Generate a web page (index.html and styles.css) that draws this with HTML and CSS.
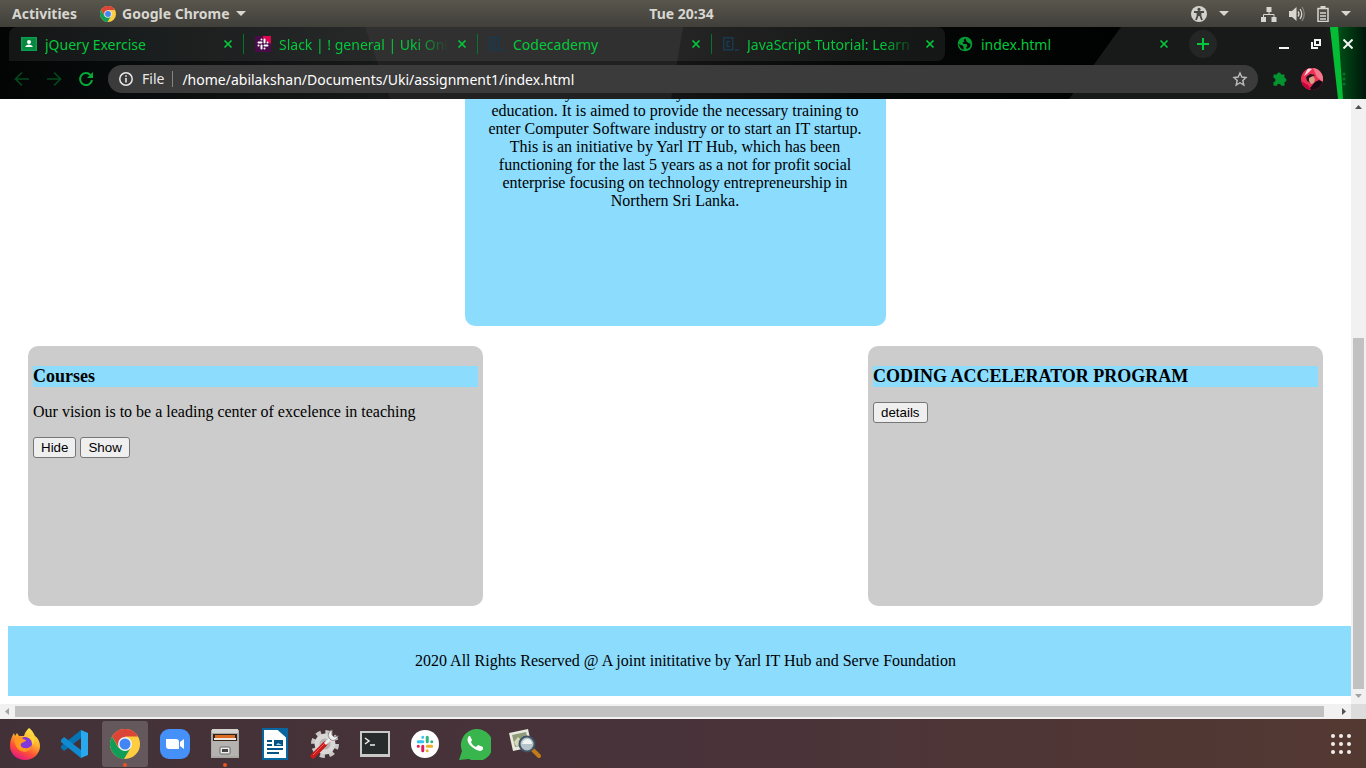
FILE: index.html
```html
<!DOCTYPE html>
<html lang="en">
<head>
<meta charset="utf-8">
<title>index.html</title>
<link rel="stylesheet" href="styles.css">
</head>
<body>
<svg width="0" height="0" class="defs" aria-hidden="true">
  <defs>
    <symbol id="close" viewBox="0 0 10 10"><path d="M1.500 1.500l7 7M8.500 1.500l-7 7" fill="none" stroke="currentColor" stroke-width="1.700"/></symbol>
    <symbol id="chrome" viewBox="0 0 30 30">
      <circle cx="15" cy="15" r="15" fill="#ffcd40"/>
      <path d="M2 7.500A15 15 0 0 1 28 7.500H15L9 19z" fill="#dc4437"/>
      <path d="M2 7.500A15 15 0 0 0 14 30L20.500 19H8.500z" fill="#0f9d58"/>
      <circle cx="15" cy="15" r="7" fill="#f1f1f1"/><circle cx="15" cy="15" r="5.500" fill="#4285f4"/>
    </symbol>
    <symbol id="caret" viewBox="0 0 10 5"><path d="M0 0h10L5 5z" fill="currentColor"/></symbol>
    <symbol id="codecademy" viewBox="0 0 16 16"><path d="M.7 1.700h9v12h-9zM7 5.500H4v5h3M12 14h4" fill="none" stroke="#173a50" stroke-width="1.500"/></symbol>
    <symbol id="slack" viewBox="0 0 24 24">
      <g fill="none" stroke-width="4" stroke-linecap="round">
        <path d="M9 9H3M9 3v.1" stroke="var(--a,#36c5f0)"/><path d="M15 9V3M21 9h.1" stroke="var(--b,#2eb67d)"/>
        <path d="M15 15h6M15 21v.1" stroke="var(--c,#ecb22e)"/><path d="M9 15v6M3 15h.1" stroke="var(--d,#e01e5a)"/>
      </g>
    </symbol>
  </defs>
</svg>

<header class="topbar">
  <div class="topbar-left">
    <button class="plain" type="button">Activities</button>
    <button class="plain app-menu" type="button"><svg width="16" height="16"><use href="#chrome"/></svg>Google Chrome<svg width="10" height="5"><use href="#caret"/></svg></button>
  </div>
  <time>Tue 20:34</time>
  <div class="topbar-right">
    <svg width="16" height="16" viewBox="0 0 16 16"><circle cx="8" cy="8" r="8" fill="#d3d1cc"/><g fill="none" stroke="#4b4943" stroke-width="1.800"><path d="M3 6h10M8 6v4M6.500 6v4l-1.500 4M9.500 6v4l1.500 4"/></g><circle cx="8" cy="3.400" r="1.600" fill="#4b4943"/></svg>
    <svg class="caret-access" width="10" height="5"><use href="#caret"/></svg>
    <svg width="16" height="16" viewBox="0 0 16 16"><path d="M5.500 1h5v5h-5zM0 11h5v5H0zM10.500 11h5v5h-5z" fill="currentColor"/><path d="M8 6v2.500M2.500 11V8.500h10.500V11" fill="none" stroke="currentColor"/></svg>
    <svg width="16" height="16" viewBox="0 0 16 16"><path d="M0 5h3l4.500-4v14L3 11H0z" fill="currentColor"/><path d="M9 5.500q2 2.500 0 5M11 3q3.500 5 0 10" fill="none" stroke="currentColor" stroke-width="1.300"/><path d="M13 1q4.500 7 0 14" fill="none" stroke="#85827a" stroke-width="1.300"/></svg>
    <svg width="12" height="16" viewBox="0 0 12 16"><path d="M1 2.500h10v13H1zM3 7h6M3 10h6M3 13h6" fill="none" stroke="currentColor" stroke-width="1.500"/><path d="M3.500 0h5v3h-5z" fill="currentColor"/></svg>
    <svg width="10" height="5"><use href="#caret"/></svg>
  </div>
</header>

<section class="browser">
  <svg class="theme" viewBox="0 0 1366 72" preserveAspectRatio="none" aria-hidden="true">
    <defs>
      <linearGradient id="base"><stop offset="0" stop-color="#030505"/><stop offset=".1" stop-color="#090c0c"/><stop offset=".27" stop-color="#171919"/><stop offset=".48" stop-color="#202020"/><stop offset="1" stop-color="#1b1b1b"/></linearGradient>
      <linearGradient id="dark"><stop offset="0" stop-color="#151515"/><stop offset=".4" stop-color="#060707"/><stop offset="1" stop-color="#000202"/></linearGradient>
      <linearGradient id="glow"><stop offset="0" stop-color="#078a28"/><stop offset=".3" stop-color="#004a15"/><stop offset="1" stop-color="#00150a"/></linearGradient>
    </defs>
    <path d="M0 0h1366v72H0z" fill="url(#base)"/>
    <path d="M365 0h318l-12 72H390z" fill="#212121"/>
    <path d="M683 0h440l-48 72H671z" fill="url(#dark)"/>
    <path d="M1121 0h205l12 72h-269z" fill="#181919"/>
    <path d="M1330 0h36v72h-25z" fill="url(#glow)"/>
    <path d="M1330 0h8l5 72h-5z" fill="#05bd35"/>
  </svg>
  <nav class="tabs" aria-label="Tabs">
    <div class="tab"><svg width="16" height="16" viewBox="0 0 16 16"><path d="M0 1h16v14H0z" fill="#0b9d50"/><path d="M1.500 2.500h13v11h-13z" fill="#07873f"/><circle cx="8" cy="6" r="2" fill="#fff"/><path d="M4 11q1-2.500 4-2.500t4 2.500z" fill="#fff"/></svg><a href="#jquery">jQuery Exercise</a><button type="button" aria-label="Close"><svg width="10" height="10"><use href="#close"/></svg></button></div>
    <div class="tab fade"><svg class="slack-tile" width="16" height="16" viewBox="0 0 16 16"><path d="M0 0h16v16H0z" fill="#4a0b4b"/><path d="M8 0h8v8L8 3z" fill="#df074f"/><use href="#slack" x="2" y="2" width="12" height="12"/></svg><a href="#slack-tab">Slack | ! general | Uki Onli</a><button type="button" aria-label="Close"><svg width="10" height="10"><use href="#close"/></svg></button></div>
    <div class="tab"><svg width="16" height="16"><use href="#codecademy"/></svg><a href="#codecademy-tab">Codecademy</a><button type="button" aria-label="Close"><svg width="10" height="10"><use href="#close"/></svg></button></div>
    <div class="tab fade last"><svg width="16" height="16"><use href="#codecademy"/></svg><a href="#tutorial">JavaScript Tutorial: Learn</a><button type="button" aria-label="Close"><svg width="10" height="10"><use href="#close"/></svg></button></div>
    <div class="tab active"><svg width="16" height="16" viewBox="0 0 16 16"><circle cx="8" cy="8" r="7.300" fill="#049b32"/><path d="M8.500 2.500l-2 1.500 1 1.500-2 1 1 1.500h3l1 2-1.500 1.500 1 1.500 3-2 .5-3-2-1-2-1.500zM1.500 8l4 1.500 1 1.500v3l-3-2z" fill="#010302"/></svg><a href="#index">index.html</a><button type="button" aria-label="Close"><svg width="10" height="10"><use href="#close"/></svg></button></div>
    <button class="new-tab" type="button" aria-label="New tab"><svg width="12" height="12" viewBox="0 0 12 12"><path d="M6 0v12M0 6h12" stroke="currentColor" stroke-width="2"/></svg></button>
    <div class="window-buttons">
      <button type="button" aria-label="Minimize"><svg width="10" height="10" viewBox="0 0 10 10"><path d="M0 9h10" stroke="currentColor" stroke-width="2"/></svg></button>
      <button type="button" aria-label="Restore"><svg width="10" height="10" viewBox="0 0 10 10"><path d="M4 1h5v5H4zM1 3v6h6" fill="none" stroke="currentColor" stroke-width="2"/></svg></button>
      <button type="button" aria-label="Close window"><svg width="10" height="10" viewBox="0 0 10 10"><path d="M.5.5l9 9M9.500.5l-9 9" stroke="currentColor" stroke-width="2"/></svg></button>
    </div>
  </nav>
  <div class="toolbar">
    <button class="dim" type="button" aria-label="Back"><svg width="16" height="16" viewBox="0 0 16 16"><path d="M15 8H2M8 1.500L1.500 8 8 14.500" fill="none" stroke="currentColor" stroke-width="1.700"/></svg></button>
    <button class="dim" type="button" aria-label="Forward"><svg width="16" height="16" viewBox="0 0 16 16"><path d="M1 8h13M8 1.500L14.500 8 8 14.500" fill="none" stroke="currentColor" stroke-width="1.700"/></svg></button>
    <button type="button" aria-label="Reload"><svg width="16" height="16" viewBox="0 0 16 16"><path d="M12.500 4A6 6 0 1 0 14 9" fill="none" stroke="currentColor" stroke-width="2"/><path d="M15 1v6H9z" fill="currentColor"/></svg></button>
    <div class="address">
      <svg width="14" height="14" viewBox="0 0 14 14"><circle cx="7" cy="7" r="6.200" fill="none" stroke="currentColor" stroke-width="1.500"/><path d="M7 6v4.500M7 3.300v1.500" stroke="currentColor" stroke-width="1.600"/></svg>
      <span class="scheme">File</span>
      <input type="text" aria-label="Address" value="/home/abilakshan/Documents/Uki/assignment1/index.html">
      <button type="button" aria-label="Bookmark"><svg width="16" height="16" viewBox="0 0 16 16"><path d="M8 2l1.800 4 4.200.5-3.200 3 1 4.500L8 11.700 4.200 14l1-4.500L2 6.500 6.200 6z" fill="none" stroke="#bdbdbd" stroke-width="1.400"/></svg></button>
    </div>
    <button type="button" aria-label="Extensions"><svg width="16" height="16" viewBox="0 0 16 16"><path d="M1.500 3.500H5a2 2 0 0 1 4 0h3.500V7a2 2 0 0 1 0 4v3.700H9a2 2 0 0 0-4 0H1.500V11a2 2 0 0 0 0-4z" fill="#03942f"/></svg></button>
    <button type="button" aria-label="Profile"><svg width="22" height="22" viewBox="0 0 22 22"><defs><clipPath id="face"><circle cx="11" cy="11" r="11"/></clipPath></defs><g clip-path="url(#face)"><path d="M0 0h22v22H0z" fill="#ed3055"/><path d="M12 0h10v14l-6-5z" fill="#f4778a"/><path d="M7 0l4 1-5 5-3 2z" fill="#f7d6dc"/><path d="M5 9l4-3 5 1-4 3 0 5-4-2z" fill="#24141a"/><path d="M8 10l4-2 2 3-1 4-3 1-2-3z" fill="#d6a083"/><path d="M9 20l5-6 4-2 4 2v8H10z" fill="#160c17"/><path d="M0 13l7 4 3 5H4z" fill="#c5063b"/></g></svg></button>
    <button type="button" aria-label="Menu"><svg width="16" height="16" viewBox="0 0 16 16"><g fill="#047526"><circle cx="8" cy="3" r="1.500"/><circle cx="8" cy="8" r="1.500"/><circle cx="8" cy="13" r="1.500"/></g></svg></button>
  </div>
</section>

<div class="viewport">
  <main class="page">
    <section class="intro"><p>for local youth who already have finished the school education. It is aimed to provide the necessary training to enter Computer Software industry or to start an IT startup. This is an initiative by Yarl IT Hub, which has been functioning for the last 5 years as a not for profit social enterprise focusing on technology entrepreneurship in Northern Sri Lanka.</p></section>
    <div class="cards">
      <section class="card">
        <h3>Courses</h3>
        <p>Our vision is to be a leading center of excelence in teaching</p>
        <button type="button">Hide</button> <button type="button">Show</button>
      </section>
      <section class="card">
        <h3>CODING ACCELERATOR PROGRAM</h3>
        <button type="button">details</button>
      </section>
    </div>
    <footer>2020 All Rights Reserved @ A joint inititative by Yarl IT Hub and Serve Foundation</footer>
  </main>
  <div class="scroll-y"><svg width="7" height="4" viewBox="0 0 7 4"><path d="M0 4h7L3.500 0z" fill="#505050"/></svg><div class="track"><div class="thumb"></div></div><svg width="7" height="4" viewBox="0 0 7 4"><path d="M0 0h7L3.500 4z" fill="#a3a3a3"/></svg></div>
  <div class="scroll-x"><svg width="4" height="7" viewBox="0 0 4 7"><path d="M4 0v7L0 3.500z" fill="#a3a3a3"/></svg><div class="thumb"></div><svg width="4" height="7" viewBox="0 0 4 7"><path d="M0 0v7l4-3.500z" fill="#505050"/></svg></div>
  <div class="corner"></div>
</div>

<nav class="dock" aria-label="Dock">
  <button type="button" aria-label="Firefox"><svg width="32" height="32" viewBox="0 0 32 32"><defs><linearGradient id="ff" x1=".8" y1="0" x2=".3" y2="1"><stop offset="0" stop-color="#fff44f"/><stop offset=".4" stop-color="#ffb02d"/><stop offset=".7" stop-color="#ff5037"/><stop offset="1" stop-color="#e31587"/></linearGradient></defs><path d="M20 0c4 3 5 6 6 8 3 2 5 6 5 10a15 14 0 0 1-30 0C1 12 3 8 5 5l1 3 2-3 2 3 5 0c1-4 3-6 5-8z" fill="url(#ff)"/><circle cx="16" cy="16" r="7" fill="#8138dc"/><path d="M6 9c5-2 7 0 8 2l3 1c0 2-4 2-5 4s1 4 4 4c3 1 5-1 7-3-1 7-9 9-14 4-3-3-4-8-3-12z" fill="#ff9820"/><path d="M18 9c5 1 6 5 5 8 4-3 3-7 0-9z" fill="#ffd436"/></svg></button>
  <button type="button" aria-label="Visual Studio Code"><svg width="30" height="30" viewBox="0 0 30 30"><path d="M21 1v8L4 22l-3-3v-2z" fill="#0673b4"/><path d="M1 11l3-3 17 13v8L1 13z" fill="#118bd0"/><path d="M21 1l7 3v22l-7 3z" fill="#29a8ee"/></svg></button>
  <button class="current running" type="button" aria-label="Google Chrome"><svg width="30" height="30"><use href="#chrome"/></svg></button>
  <button type="button" aria-label="Zoom"><svg width="30" height="30" viewBox="0 0 30 30"><rect width="30" height="30" rx="9" fill="#4690fa"/><path d="M6 10h10q3 0 3 3v7H9q-3 0-3-3zM20 13l4-3v10l-4-3z" fill="#fff"/></svg></button>
  <button class="running" type="button" aria-label="Files"><svg width="30" height="32" viewBox="0 0 30 32"><path d="M1 2h28v28H1z" fill="#aaa8a4"/><path d="M2 1h26v4H2z" fill="#d4d3d0"/><path d="M3 6h24v7H3z" fill="#30241d"/><path d="M5 7h20v3H5z" fill="#d96b26"/><path d="M4 10h22v2H4z" fill="#f1e9df"/><path d="M2 13h26v15H2z" fill="#b4b3b0"/><rect x="10" y="19" width="10" height="7" rx="1" fill="#eee" stroke="#656565"/><path d="M12 21h6v3h-6z" fill="#444"/></svg></button>
  <button type="button" aria-label="Writer"><svg width="28" height="32" viewBox="0 0 28 32"><path d="M2 1h15l9 8v22H2z" fill="#fff" stroke="#07669f" stroke-width="2"/><path d="M17 0h10v10z" fill="#07669f"/><path d="M6 13h5M6 17h5M6 21h16M6 25h12" stroke="#075482" stroke-width="2"/><path d="M13 12h9v6h-9z" fill="#075482"/><path d="M15 17l2-2 4 2z" fill="#9ad0ec"/></svg></button>
  <button type="button" aria-label="Settings"><svg width="32" height="32" viewBox="0 0 32 32"><circle cx="16" cy="16" r="12" fill="none" stroke="#c9c7c4" stroke-width="4" stroke-dasharray="5 4.420"/><circle cx="16" cy="16" r="8" fill="#b5b3b1" stroke="#d9d8d6" stroke-width="5"/><path d="M4 28L16 16" stroke="#c91c1c" stroke-width="5" stroke-linecap="round"/><path d="M4 27L15 16" stroke="#ee5d55"/><path d="M16 16l6-6" stroke="#eee" stroke-width="3"/><path d="M23 2c-4 2-5 6-2 9s7 1 8-3l-4 1-2-2z" fill="#eee" stroke="#8a8887"/></svg></button>
  <button type="button" aria-label="Terminal"><svg width="30" height="26" viewBox="0 0 30 26"><path d="M0 0h30v26H0z" fill="#c9c9c8"/><path d="M2 2h26v21H2z" fill="#292c2d"/><path d="M5 7l4 3-4 3M10 14h5" fill="none" stroke="#eee" stroke-width="1.500"/></svg></button>
  <button type="button" aria-label="Slack"><svg width="28" height="28" viewBox="0 0 28 28"><circle cx="14" cy="14" r="14" fill="#fff"/><use href="#slack" x="5" y="5" width="18" height="18"/></svg></button>
  <button type="button" aria-label="WhatsApp"><svg width="32" height="32" viewBox="0 0 32 32"><path d="M0 32l3-9A16 16 0 1 1 10 31z" fill="#39b54d"/><path d="M10 8c-3 3-1 8 3 11s9 6 11 2l0-2-5-2-2 2c-3-1-4-3-5-5l1-2-2-4z" fill="#fff"/></svg></button>
  <button type="button" aria-label="Image Viewer"><svg width="32" height="32" viewBox="0 0 32 32"><path d="M0 5l19-4 4 18-19 4z" fill="#e9e8df"/><path d="M3 7l14-3 3 12-14 3z" fill="#8f9a78"/><path d="M5 14l4-5 4 4 3-6 3 8-12 3z" fill="#d8dab4"/><path d="M24 22l6 6" stroke="#c17b19" stroke-width="4" stroke-linecap="round"/><circle cx="18" cy="16" r="7.500" fill="#b5c3ca" stroke="#405466" stroke-width="2"/><path d="M13 16q1-5 6-5 4 1 4 5z" fill="#f0f3ef"/></svg></button>
  <button class="show-apps" type="button" aria-label="Show Applications"><svg width="20" height="20" viewBox="0 0 20 20"><g fill="#f1efed"><circle cx="2" cy="2" r="2"/><circle cx="10" cy="2" r="2"/><circle cx="18" cy="2" r="2"/><circle cx="2" cy="10" r="2"/><circle cx="10" cy="10" r="2"/><circle cx="18" cy="10" r="2"/><circle cx="2" cy="18" r="2"/><circle cx="10" cy="18" r="2"/><circle cx="18" cy="18" r="2"/></g></svg></button>
</nav>
</body>
</html>
```
FILE: styles.css
```css
* { box-sizing: border-box; }

body {
  margin: 0;
  height: 100vh;
  overflow: hidden;
  display: flex;
  flex-direction: column;
  font-family: "Noto Sans", "Open Sans", sans-serif;
  font-size: 14px;
}

svg { display: block; flex: none; }
.defs { position: absolute; }

.topbar button,
.browser button,
.dock button {
  border: 0;
  padding: 0;
  background: none;
  color: inherit;
  font: inherit;
  display: flex;
  align-items: center;
  justify-content: center;
}

/* System bar */
.topbar {
  flex: none;
  height: 27px;
  padding: 0 15px 0 12px;
  display: grid;
  grid-template-columns: 1fr auto 1fr;
  align-items: center;
  background: linear-gradient(#59564d, #403f3a);
  color: #d8d6d0;
  font-weight: 700;
}
.topbar-left { display: flex; gap: 23px; }
.topbar .app-menu { gap: 6px; }
.topbar-right { display: flex; align-items: center; justify-content: flex-end; gap: 12px; }
.caret-access { margin-right: 20px; }

/* Browser frame */
.browser { flex: none; position: relative; color: #04c83b; }
.theme { position: absolute; inset: 0; width: 100%; height: 100%; }
.tabs { position: relative; display: flex; height: 34px; padding: 0 12px 0 9px; align-items: center; }
.tab {
  flex: 0 1 234px;
  min-width: 0;
  height: 34px;
  padding: 0 10px 0 12px;
  display: flex;
  align-items: center;
  gap: 8px;
  background: rgba(255, 255, 255, .07);
}
.tab:first-child { border-radius: 8px 0 0 0; }
.tab.last { border-radius: 0 8px 8px 0; }
.tab.active { background: none; }
.tab + .tab:not(.active) { background-image: linear-gradient(#04752a, #04752a); background-size: 1px 20px; background-position: 0 7px; background-repeat: no-repeat; }
.tab a { flex: 1; min-width: 0; overflow: hidden; white-space: nowrap; color: inherit; text-decoration: none; }
.tab.fade a { mask-image: linear-gradient(90deg, #000 80%, transparent); }
.slack-tile { --a: #fff; --b: #fff; --c: #fff; --d: #fff; }
.browser .new-tab { width: 28px; height: 28px; margin-left: 10px; border-radius: 50%; background: #242525; }
.window-buttons { margin-left: auto; display: flex; gap: 22px; padding-right: 1px; color: #f4f4f4; }

.toolbar { position: relative; height: 38px; padding: 4px 14px 6px; display: flex; align-items: center; gap: 16px; color: #04a936; }
.browser .dim { color: #04491c; }
.address {
  flex: 1;
  height: 28px;
  margin-right: -2px;
  margin-left: -2px;
  padding: 0 10px 0 11px;
  display: flex;
  align-items: center;
  border-radius: 14px;
  background: #3b3b3b;
  color: #e8e8e8;
}
.scheme { padding: 0 8px 0 9px; border-right: 1px solid #858585; line-height: 16px; }
.address input { flex: 1; min-width: 0; border: 0; padding: 0 0 0 9px; background: none; color: #fff; font: inherit; outline: 0; }
.toolbar .address ~ button { margin-right: -3px; }
.toolbar .address ~ button:last-child { margin-right: 0; }

/* Web page */
.viewport {
  flex: 1;
  min-height: 0;
  display: grid;
  grid-template: minmax(0, 1fr) 15px / minmax(0, 1fr) 15px;
  background: #fff;
}
.page { overflow: hidden; padding-left: 8px; font: 16px/18px "Liberation Serif", serif; color: #000; }
.intro {
  width: 421px;
  height: 227px;
  padding: 0 20px;
  margin-left: calc(50% - 215px);
  overflow: hidden;
  border-radius: 0 0 10px 10px;
  background: #8cdcfe;
  text-align: center;
}
.intro p { margin: -15px 0 0; }
.cards { display: flex; justify-content: space-between; padding: 20px 28px 20px 20px; }
.card { width: 455px; height: 260px; padding: 20px 5px; border-radius: 10px; background: #ccc; }
.card h3 { margin: 0; font-size: 18px; line-height: 21px; background: #8cdcfe; }
.card p { margin: 16px 0; }
.card h3 + button { margin-top: 15px; }
.card button { padding: 2px 7px; border: 1px solid #767676; border-radius: 3px; background: #efefef; color: #000; font-family: "Liberation Sans", sans-serif; }
.page footer { margin-right: -12px; padding: 26px 0; text-align: center; background: #8cdcfe; }

.scroll-y { display: flex; flex-direction: column; align-items: center; padding: 6px 0; gap: 5px; background: #f1f1f1; }
.track { flex: 1; width: 11px; display: flex; flex-direction: column; justify-content: flex-end; }
.scroll-y .thumb { height: 61%; background: #c1c1c1; }
.scroll-x { display: flex; align-items: center; padding: 0 5px; gap: 6px; background: #f1f1f1; }
.scroll-x .thumb { flex: 1; height: 11px; margin-right: 12px; background: #c1c1c1; }
.corner { background: #dcdcdc; }

/* Dock */
.dock {
  flex: none;
  height: 49px;
  padding: 0 2px;
  display: flex;
  align-items: center;
  gap: 4px;
  background: linear-gradient(90deg, #423237, #49333a 50%, #543932);
}
.dock button { position: relative; width: 46px; height: 46px; border-radius: 3px; }
.dock .current { background: #65585c; }
.dock .running::after { content: ""; position: absolute; bottom: 0; left: 21px; width: 4px; height: 4px; border-radius: 50%; background: #e95420; }
.dock .show-apps { margin-left: auto; }
```
